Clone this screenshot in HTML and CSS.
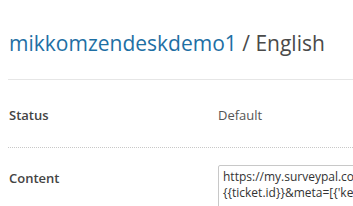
FILE: index.html
```html
<!DOCTYPE html>
<html>
<head>
<meta charset="utf-8">
<link rel="stylesheet" href="styles.css">
</head>
<body>
<div class="page">
  <h1 class="title"><span class="brand">mikkomzendeskdemo1</span> / English</h1>
  <div class="row status-row">
    <div class="label">Status</div>
    <div class="value">Default</div>
  </div>
  <div class="row content-row">
    <div class="label">Content</div>
    <div class="value"><div class="textarea">https://my.surveypal.com/app/form/ext?_d=0&amp;_sid=123&amp;_k=abc&amp;ticket=<br>{{ticket.id}}&amp;meta=[{'key':'ticket','value':'{{ticket.id}}'}]</div></div>
  </div>
</div>
</body>
</html>
```
FILE: styles.css
```css
html, body { margin: 0; padding: 0; background: #fff; }
body { font-family: "Open Sans", "Noto Sans", sans-serif; color: #555; overflow: hidden; width: 353px; height: 206px; }
.page { padding: 27px 0 0 8px; }
.title {
  margin: 0;
  font-size: 21px;
  font-weight: 400;
  line-height: 32px;
  color: #4a4a4a;
  padding: 0 0 0 1px;
  height: 52px;
  border-bottom: 1px solid #e6e6e6;
  white-space: nowrap;
}
.brand { color: #1e6fa4; }
.row { display: flex; font-size: 13px; }
.status-row { padding-top: 25px; height: 42px; border-bottom: 1px dotted #c8c8c8; }
.content-row { padding-top: 17px; }
.label { width: 209px; flex-shrink: 0; padding-left: 1px; font-weight: 600; color: #444; line-height: 20px; }
.value { line-height: 20px; color: #555; }
.content-row .label { padding-top: 3px; }
.textarea {
  border: 1px solid #c8c8c8;
  border-radius: 2px;
  padding: 3px 0 0 4px;
  width: 200px;
  height: 60px;
  font-size: 12px;
  line-height: 16px;
  color: #333;
  white-space: nowrap;
  overflow: hidden;
}
```
